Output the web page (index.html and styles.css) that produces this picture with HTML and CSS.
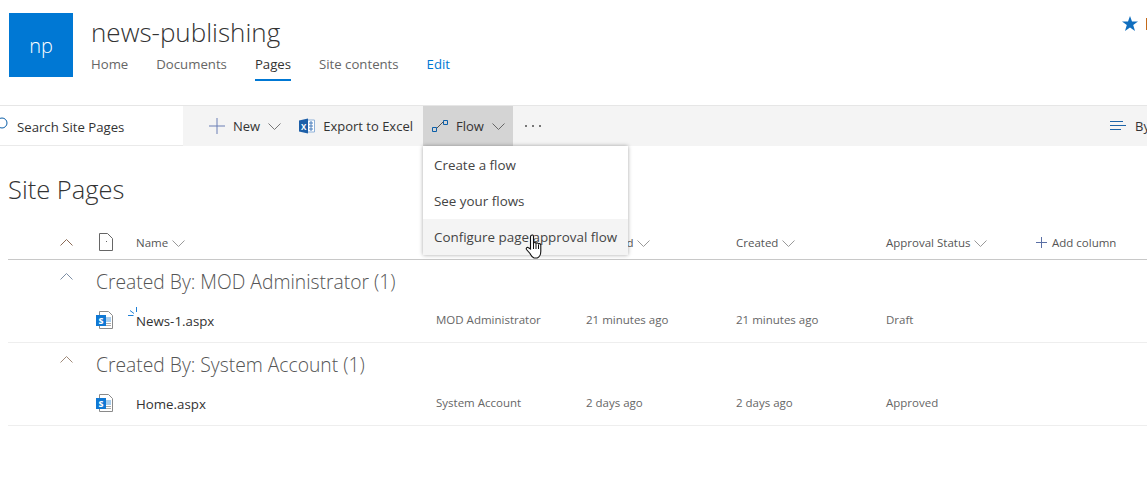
FILE: index.html
```html
<!DOCTYPE html>
<html lang="en">
<head>
	<meta charset="UTF-8">
	<title>Site Pages</title>
	<link rel="stylesheet" href="styles.css">
</head>
<body>
	<div id="page">
		<div id="header">
			<div id="logo">np</div>
			<div id="siteinfo">
				<div id="sitename">news-publishing</div>
				<ul id="nav">
					<li>Home</li>
					<li>Documents</li>
					<li class="selected">Pages</li>
					<li>Site contents</li>
					<li class="edit">Edit</li>
				</ul>
			</div>
			<div id="follow">
				<svg width="16" height="16" viewBox="0 0 16 16"><path d="M8 0l2 5.600h6l-4.800 3.500 1.800 5.900-5-3.600-5 3.600 1.800-5.900L0 5.600h6z" fill="#106ebe"/></svg>
				<span class="followbar"></span>
			</div>
		</div>

		<div id="commandbar">
			<div id="search">
				<svg class="searchicon" width="12" height="12" viewBox="0 0 12 12"><circle cx="6" cy="6" r="5" fill="none" stroke="#0b5ea8" stroke-width="1"/></svg>
				<span>Search Site Pages</span>
			</div>
			<div id="commands">
				<div class="cmd">
					<svg width="16" height="16" viewBox="0 0 16 16"><path d="M8 0v16M0 8h16" stroke="#6a7fb5" stroke-width="1"/></svg>
					<span>New</span>
					<svg class="chevron" width="13" height="7" viewBox="0 0 13 7"><path d="M.5.500l6 6 6-6" fill="none" stroke="#777"/></svg>
				</div>
				<div class="cmd export">
					<svg width="16" height="16" viewBox="0 0 16 16">
						<path d="M8 2h7.500v12H8z" fill="#fff" stroke="#8fb1d8"/>
						<path d="M10 5h4M10 8h4M10 11h4M12 3v10" stroke="#4a7fbc"/>
						<path d="M0 2.500L9 .500v15l-9-2z" fill="#1d5fa8"/>
						<text x="2" y="11.500" class="xlabel">X</text>
					</svg>
					<span>Export to Excel</span>
				</div>
				<div class="cmd open">
					<svg width="16" height="12" viewBox="0 0 16 12"><path d="M.5 7.500h4v4h-4zM11.500.500h4v4h-4z" fill="none" stroke="#0b5ea8"/><path d="M5 8l6-6" stroke="#555"/></svg>
					<span>Flow</span>
					<svg class="chevron" width="13" height="7" viewBox="0 0 13 7"><path d="M.5.500l6 6 6-6" fill="none" stroke="#666"/></svg>
				</div>
				<div class="cmd more">
					<span class="dot"></span><span class="dot"></span><span class="dot"></span>
				</div>
			</div>
			<div id="sort">
				<svg width="16" height="10" viewBox="0 0 16 10"><path d="M0 .500h13M0 4.500h16M0 8.500h11" stroke="#1c64a8"/></svg>
				<span>By</span>
			</div>
		</div>

		<h1 id="title">Site Pages</h1>

		<div id="list">
			<div class="row head">
				<div class="expand"><svg width="13" height="7" viewBox="0 0 13 7"><path d="M.5 6.500l6-6 6 6" fill="none" stroke="#8a6a55"/></svg></div>
				<div class="type"><svg width="14" height="18" viewBox="0 0 14 18"><path d="M.5.500h8l5 5v12H.500z" fill="#fff" stroke="#666"/><path d="M7 8.500h1" stroke="#666"/></svg></div>
				<div>Name <svg class="chevron" width="13" height="7" viewBox="0 0 13 7"><path d="M.5.500l6 6 6-6" fill="none" stroke="#999"/></svg></div>
				<div>Modified By</div>
				<div>Modified <svg class="chevron" width="13" height="7" viewBox="0 0 13 7"><path d="M.5.500l6 6 6-6" fill="none" stroke="#999"/></svg></div>
				<div>Created <svg class="chevron" width="13" height="7" viewBox="0 0 13 7"><path d="M.5.500l6 6 6-6" fill="none" stroke="#999"/></svg></div>
				<div>Approval Status <svg class="chevron" width="13" height="7" viewBox="0 0 13 7"><path d="M.5.500l6 6 6-6" fill="none" stroke="#999"/></svg></div>
				<div class="addcol"><svg width="11" height="11" viewBox="0 0 11 11"><path d="M5.500 0v11M0 5.500h11" stroke="#5a6fa5"/></svg><span>Add column</span></div>
			</div>

			<div class="group">
				<div class="expand"><svg width="13" height="7" viewBox="0 0 13 7"><path d="M.5 6.500l6-6 6 6" fill="none" stroke="#7d8ea5"/></svg></div>
				<div class="groupname">Created By: MOD Administrator (1)</div>
			</div>
			<div class="row item">
				<div></div>
				<div class="type">
					<svg width="17" height="18" viewBox="0 0 17 18">
						<path d="M3.500.500h9l4 4v13h-13z" fill="#fff" stroke="#8a8a8a"/>
						<path d="M9 6h6v5H9z" fill="#a9cdec"/>
						<path d="M9 12.500h6M9 14.500h6" stroke="#aaa"/>
						<path d="M0 4h10v11H0z" fill="#0f78d4"/>
						<text x="2.500" y="13" class="slabel">s</text>
					</svg>
				</div>
				<div class="filename">News-1.aspx
					<svg class="newmark" width="10" height="11" viewBox="0 0 10 11"><path d="M0 8.500h5.500M2 3.500l4 3M8.500 0v5" stroke="#1e7fd6"/></svg>
				</div>
				<div>MOD Administrator</div>
				<div>21 minutes ago</div>
				<div>21 minutes ago</div>
				<div>Draft</div>
				<div></div>
			</div>

			<div class="group">
				<div class="expand"><svg width="13" height="7" viewBox="0 0 13 7"><path d="M.5 6.500l6-6 6 6" fill="none" stroke="#a08a7a"/></svg></div>
				<div class="groupname">Created By: System Account (1)</div>
			</div>
			<div class="row item">
				<div></div>
				<div class="type">
					<svg width="17" height="18" viewBox="0 0 17 18">
						<path d="M3.500.500h9l4 4v13h-13z" fill="#fff" stroke="#8a8a8a"/>
						<path d="M9 6h6v5H9z" fill="#a9cdec"/>
						<path d="M9 12.500h6M9 14.500h6" stroke="#aaa"/>
						<path d="M0 4h10v11H0z" fill="#0f78d4"/>
						<text x="2.500" y="13" class="slabel">s</text>
					</svg>
				</div>
				<div class="filename">Home.aspx</div>
				<div>System Account</div>
				<div>2 days ago</div>
				<div>2 days ago</div>
				<div>Approved</div>
				<div></div>
			</div>
		</div>

		<ul id="flowmenu">
			<li>Create a flow</li>
			<li>See your flows</li>
			<li class="hover">Configure page approval flow</li>
		</ul>

		<svg id="cursor" width="19" height="25" viewBox="0 0 19 25">
			<path d="M6 1.500c1.200-1 2.500-.4 2.500 1v6.500c1-.8 2-.6 2.500.3 1-.7 2-.4 2.500.5 1-.5 2.300 0 2.300 1.500v6c0 3-1.500 6.200-3.500 6.700H9c-1.500-.5-3-2.500-4-4.500l-3.500-4c-.8-1.500.8-2.800 2-1.800L5.500 15V3c0-.6.200-1.100.5-1.500z" fill="#fff" stroke="#111" stroke-width="1.100"/>
			<path d="M8.500 9v6M11 9.500V15M13.500 10.500V15" stroke="#111"/>
		</svg>
	</div>
</body>
</html>
```

FILE: styles.css
```css
*{
	margin: 0;
	padding: 0;
	box-sizing: border-box;
}
ul{
	list-style: none;
}
html, body{
	height: 100%;
	background: #fff;
}
body{
	font-family: "Open Sans", "Noto Sans", sans-serif;
	color: #333;
	overflow: hidden;
}
#page{
	position: relative;
	width: 1147px;
	height: 494px;
	overflow: hidden;
}
#header{
	display: flex;
	height: 105px;
	padding: 13px 0 0 9px;
}
#logo{
	width: 64px;
	height: 64px;
	background: #0078d4;
	color: #fff;
	font-size: 20px;
	font-weight: 300;
	text-align: center;
	line-height: 66px;
}
#siteinfo{
	margin-left: 18px;
}
#sitename{
	font-size: 26px;
	font-weight: 300;
	line-height: 38px;
	color: #333;
}
#nav{
	display: flex;
	gap: 28px;
	font-size: 13.200px;
	color: #666;
	margin-top: 3px;
}
#nav li{
	height: 27px;
	line-height: 20px;
}
#nav .selected{
	color: #333;
	border-bottom: 2px solid #0078d4;
}
#nav .edit{
	color: #0078d4;
}
#follow{
	display: flex;
	align-items: flex-start;
	margin-left: auto;
	padding-top: 3px;
	gap: 8px;
	margin-right: -1px;
}
.followbar{
	width: 2px;
	height: 12px;
	margin-top: 2px;
	background: #c46a1a;
}
#commandbar{
	display: flex;
	height: 41px;
	background: #f4f4f4;
	border-top: 1px solid #e6e6e6;
	font-size: 13px;
}
#search{
	display: flex;
	align-items: center;
	width: 183px;
	height: 40px;
	background: #fff;
	border-bottom: 1px solid #eaeaea;
	padding-top: 2px;
	font-size: 13.200px;
}
.searchicon{
	margin: -8px 9px 0 -4px;
}
#commands{
	display: flex;
	margin-left: 17px;
}
.cmd{
	display: flex;
	align-items: center;
	gap: 8px;
	height: 40px;
	padding: 0 9px;
}
.export{
	padding-right: 10px;
}
.open{
	background: #d4d4d4;
	padding-right: 8px;
}
.more{
	gap: 5px;
	padding: 0 12px;
}
.dot{
	width: 2px;
	height: 2px;
	background: #777;
}
.xlabel{
	font-size: 8px;
	font-weight: 700;
	fill: #fff;
}
.slabel{
	font-size: 10px;
	font-weight: 700;
	fill: #fff;
}
#sort{
	display: flex;
	align-items: center;
	gap: 9px;
	flex: none;
	width: 37px;
	margin-left: auto;
	overflow: hidden;
	white-space: nowrap;
}
#sort svg{
	flex: none;
}
#title{
	font-size: 25.500px;
	font-weight: 300;
	line-height: 32px;
	margin: 27px 0 0 8px;
	color: #333;
}
#list{
	margin: 20px 0 0 8px;
	font-size: 11.500px;
	color: #666;
}
.row{
	display: grid;
	grid-template-columns: 88px 40px 300px 150px 150px 150px 150px 111px;
	align-items: center;
}
.head{
	height: 35px;
	border-bottom: 1px solid #c8c8c8;
	color: #555;
}
.head .chevron{
	margin-left: 1px;
}
.expand{
	padding-left: 52px;
	line-height: 0;
}
.type{
	line-height: 0;
}
.head .type{
	padding-left: 3px;
}
.addcol{
	display: flex;
	align-items: center;
	gap: 5px;
	white-space: nowrap;
}
.group{
	display: flex;
	align-items: center;
	height: 44px;
}
.group .expand{
	width: 88px;
	margin-top: -12px;
}
.groupname{
	font-size: 19.300px;
	font-weight: 300;
	color: #555;
	margin-top: -2px;
}
.item{
	height: 39px;
	padding-bottom: 7px;
	border-bottom: 1px solid #eee;
}
.item .filename{
	position: relative;
	padding-top: 2px;
	font-size: 13.300px;
	color: #333;
}
.newmark{
	position: absolute;
	left: -8px;
	top: -3px;
}
#flowmenu{
	position: absolute;
	left: 423px;
	top: 146px;
	width: 205px;
	background: #fff;
	box-shadow: 0 0 4px rgba(0, 0, 0, .35);
	font-size: 13.400px;
	color: #444;
}
#flowmenu li{
	height: 36px;
	line-height: 36px;
	padding-left: 11px;
	white-space: nowrap;
}
#flowmenu li:first-child{
	height: 37px;
	line-height: 38px;
}
#flowmenu .hover{
	background: #f4f4f4;
}
#cursor{
	position: absolute;
	left: 525px;
	top: 234px;
}
```
